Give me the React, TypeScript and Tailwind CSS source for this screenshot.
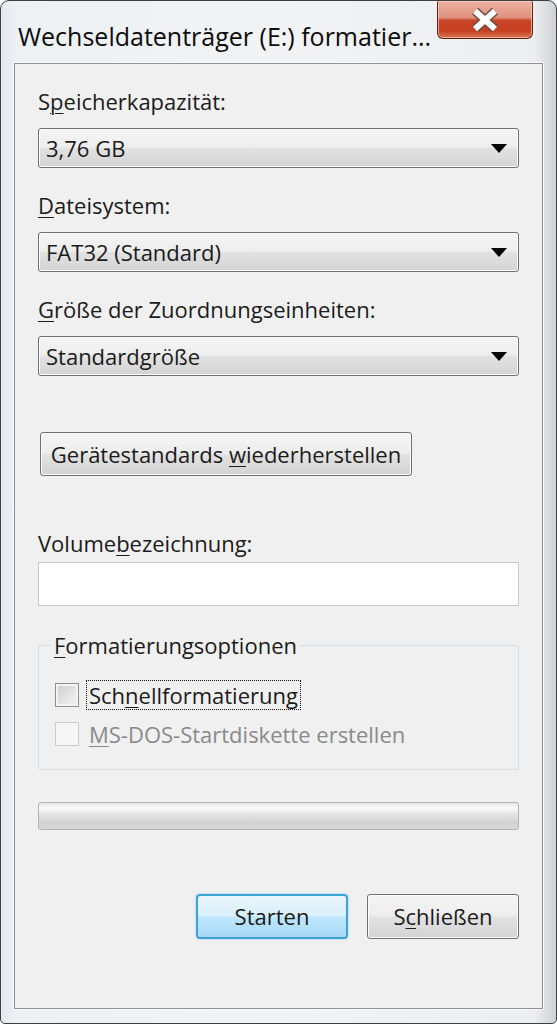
import React from "react";

const U = ({ children }: { children: React.ReactNode }) => (
  <span className="underline decoration-1 underline-offset-[3px]">{children}</span>
);

const BTN_BG =
  "bg-[linear-gradient(to_bottom,#f5f5f5_0%,#ededed_48%,#e2e2e2_52%,#d3d3d3_100%)] shadow-[inset_0_0_0_1px_#fbfbfb]";

function Combo({ children }: { children: React.ReactNode }) {
  return (
    <div className="flex h-[40px] items-center justify-between rounded-[3px] border border-[#707070] bg-[linear-gradient(to_bottom,#f5f5f5_0%,#ededed_48%,#e2e2e2_52%,#d3d3d3_100%)] pl-[7px] pr-[11px] shadow-[inset_0_0_0_1px_#fbfbfb]">
      <span className="leading-[28px]">{children}</span>
      <svg width="16" height="9" viewBox="0 0 16 9">
        <path d="M0 0 L16 0 L8 9 Z" fill="#000" />
      </svg>
    </div>
  );
}

function Label({ children, className = "" }: { children: React.ReactNode; className?: string }) {
  return <div className={"h-[28px] leading-[28px] " + className}>{children}</div>;
}

export default function App() {
  return (
    <div
      className="flex h-[1024px] w-[557px] flex-col overflow-hidden rounded-t-[9px] rounded-b-[5px] border border-[#3e3e3e] bg-[linear-gradient(to_right,#e4e9ee_0%,#eef1f4_3%,#f1f3f5_50%,#eceef0_96%,#cfd2d5_100%)] text-[22px] text-[#1b1b1b]"
      style={{ fontFamily: '"Open Sans", "Noto Sans", sans-serif' }}
    >
      {/* title bar */}
      <div className="flex h-[62px] shrink-0 items-start">
        <div className="pl-[17px] pt-[20px] text-[25px] leading-[30px] text-[#0c0c0c]">
          Wechseldatenträger (E:) formatier...
        </div>
        <div className="ml-auto mr-[23px] flex h-[38px] w-[96px] shrink-0 items-center justify-center rounded-b-[6px] rounded-t-[2px] border border-t-0 border-[#5a2318] bg-[linear-gradient(to_bottom,#eab2a3_0%,#e0917c_45%,#c9462a_52%,#c5401f_80%,#dc7552_100%)] shadow-[inset_0_0_0_1px_rgba(255,220,210,0.6)]">
          <svg width="30" height="24" viewBox="0 0 30 24">
            <path d="M5 3 L25 21 M25 3 L5 21" stroke="#6b4a44" strokeWidth="9" strokeLinecap="butt" />
            <path d="M5 3 L25 21 M25 3 L5 21" stroke="#ffffff" strokeWidth="6" strokeLinecap="butt" />
          </svg>
        </div>
      </div>

      {/* client area */}
      <div className="mx-[13px] mb-[14px] flex flex-1 flex-col border border-[#8c9197] bg-[#f0f0f0] pl-[23px] pr-[23px] pt-[23px] shadow-[0_0_0_1px_#fbfcfd]">
        <Label>
          S<U>p</U>eicherkapazität:
        </Label>
        <div className="mt-[13px]">
          <Combo>3,76 GB</Combo>
        </div>

        <Label className="mt-[23px]">
          <U>D</U>ateisystem:
        </Label>
        <div className="mt-[13px]">
          <Combo>FAT32 (Standard)</Combo>
        </div>

        <Label className="mt-[23px]">
          <U>G</U>röße der Zuordnungseinheiten:
        </Label>
        <div className="mt-[13px]">
          <Combo>Standardgröße</Combo>
        </div>

        <div className="mt-[56px] flex">
          <div className={"ml-[2px] flex h-[44px] w-[372px] items-center justify-center rounded-[3px] border border-[#707070] " + BTN_BG}>
            <span>
              Gerätestandards <U>w</U>iederherstellen
            </span>
          </div>
        </div>

        <Label className="mt-[53px]">
          Volume<U>b</U>ezeichnung:
        </Label>
        <div className="mt-[5px] h-[44px] border border-[#c5c9ce] bg-white" />

        <fieldset className="mt-[25px] rounded-[3px] border border-[#d5dce2] pb-[20px]">
          <legend className="ml-[12px] px-[3px] leading-[28px]">
            <U>F</U>ormatierungsoptionen
          </legend>
          <div className="ml-[16px] mt-[21px] flex h-[30px] items-center">
            <div className="h-[24px] w-[24px] border border-[#8e8f8f] bg-[linear-gradient(135deg,#cbcbcb_0%,#e4e4e4_55%,#f4f4f4_100%)] shadow-[inset_0_0_0_2px_#f3f3f3]" />
            <div className="ml-[7px] flex h-[30px] items-center border border-dotted border-[#111] px-[2px] leading-[28px]">
              <span>
                Sch<U>n</U>ellformatierung
              </span>
            </div>
          </div>
          <div className="ml-[16px] mt-[9px] flex h-[30px] items-center">
            <div className="h-[24px] w-[24px] border border-[#cbcbcb] bg-[#f6f6f6]" />
            <div className="ml-[10px] leading-[28px] text-[#8a8a8a]">
              <U>M</U>S-DOS-Startdiskette erstellen
            </div>
          </div>
        </fieldset>

        <div className="mt-[32px] h-[28px] rounded-[3px] border border-[#b3b3b3] bg-[linear-gradient(to_bottom,#e6e6e6_0%,#fafafa_20%,#e4e4e4_45%,#d2d2d2_75%,#d9d9d9_100%)]" />

        <div className="mt-[64px] flex justify-end gap-[19px]">
          <div className="flex h-[45px] w-[152px] items-center justify-center rounded-[4px] border-2 border-[#3ea3d6] bg-[linear-gradient(to_bottom,#eaf6fd_0%,#d9f0fc_48%,#bee6fd_52%,#a7d9f5_100%)] shadow-[0_0_2px_#6fc3ef]">
            Starten
          </div>
          <div className={"flex h-[45px] w-[152px] items-center justify-center rounded-[3px] border border-[#707070] " + BTN_BG}>
            <span>
              S<U>c</U>hließen
            </span>
          </div>
        </div>
      </div>
    </div>
  );
}
